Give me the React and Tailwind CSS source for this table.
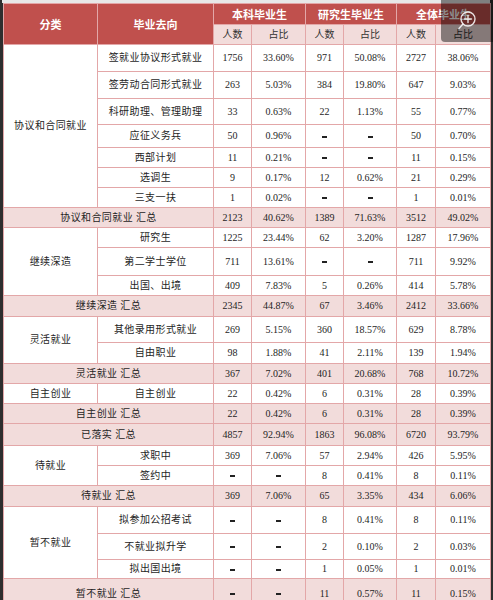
import React from 'react';

const rows = [
  { type: 'row', cat: '协议和合同就业', span: 7, name: '签就业协议形式就业', h: 27, v: ['1756', '33.60%', '971', '50.08%', '2727', '38.06%'] },
  { type: 'row', name: '签劳动合同形式就业', h: 27, v: ['263', '5.03%', '384', '19.80%', '647', '9.03%'] },
  { type: 'row', name: '科研助理、管理助理', h: 26, v: ['33', '0.63%', '22', '1.13%', '55', '0.77%'] },
  { type: 'row', name: '应征义务兵', h: 23, v: ['50', '0.96%', '-', '-', '50', '0.70%'] },
  { type: 'row', name: '西部计划', h: 20, v: ['11', '0.21%', '-', '-', '11', '0.15%'] },
  { type: 'row', name: '选调生', h: 20, v: ['9', '0.17%', '12', '0.62%', '21', '0.29%'] },
  { type: 'row', name: '三支一扶', h: 20, v: ['1', '0.02%', '-', '-', '1', '0.01%'] },
  { type: 'sum', name: '协议和合同就业 汇总', h: 20, v: ['2123', '40.62%', '1389', '71.63%', '3512', '49.02%'] },
  { type: 'row', cat: '继续深造', span: 3, name: '研究生', h: 20, v: ['1225', '23.44%', '62', '3.20%', '1287', '17.96%'] },
  { type: 'row', name: '第二学士学位', h: 28, v: ['711', '13.61%', '-', '-', '711', '9.92%'] },
  { type: 'row', name: '出国、出境', h: 20, v: ['409', '7.83%', '5', '0.26%', '414', '5.78%'] },
  { type: 'sum', name: '继续深造 汇总', h: 21, v: ['2345', '44.87%', '67', '3.46%', '2412', '33.66%'] },
  { type: 'row', cat: '灵活就业', span: 2, name: '其他录用形式就业', h: 26, v: ['269', '5.15%', '360', '18.57%', '629', '8.78%'] },
  { type: 'row', name: '自由职业', h: 21, v: ['98', '1.88%', '41', '2.11%', '139', '1.94%'] },
  { type: 'sum', name: '灵活就业 汇总', h: 20, v: ['367', '7.02%', '401', '20.68%', '768', '10.72%'] },
  { type: 'row', cat: '自主创业', span: 1, name: '自主创业', h: 20, v: ['22', '0.42%', '6', '0.31%', '28', '0.39%'] },
  { type: 'sum', name: '自主创业 汇总', h: 20, v: ['22', '0.42%', '6', '0.31%', '28', '0.39%'] },
  { type: 'sum', name: '已落实 汇总', h: 22, v: ['4857', '92.94%', '1863', '96.08%', '6720', '93.79%'] },
  { type: 'row', cat: '待就业', span: 2, name: '求职中', h: 20, v: ['369', '7.06%', '57', '2.94%', '426', '5.95%'] },
  { type: 'row', name: '签约中', h: 20, v: ['-', '-', '8', '0.41%', '8', '0.11%'] },
  { type: 'sum', name: '待就业 汇总', h: 21, v: ['369', '7.06%', '65', '3.35%', '434', '6.06%'] },
  { type: 'row', cat: '暂不就业', span: 3, name: '拟参加公招考试', h: 27, v: ['-', '-', '8', '0.41%', '8', '0.11%'] },
  { type: 'row', name: '不就业拟升学', h: 26, v: ['-', '-', '2', '0.10%', '2', '0.03%'] },
  { type: 'row', name: '拟出国出境', h: 19, v: ['-', '-', '1', '0.05%', '1', '0.01%'] },
  { type: 'sum', name: '暂不就业 汇总', h: 30, v: ['-', '-', '11', '0.57%', '11', '0.15%'] },
];

const cn = "font-['Liberation_Serif','Noto_Sans_CJK_SC',serif]";
const cell = 'border border-[#e3a7a8] text-center align-middle p-0 leading-none';

function Num({ t }) {
  // the source uses a short heavy dash for empty cells
  if (t === '-') return <span className="inline-block w-[5px] h-[2px] bg-[#222] align-middle">{''}</span>;
  return t;
}

export default function App() {
  return (
    <div className="w-[493px] h-[600px] overflow-hidden bg-[#2e2e2e] relative">
      <div className="h-[3px] ml-[2px] mr-[3px] bg-[#e8e8e8]" />
      <table className={`ml-[3px] w-[487px] table-fixed border-collapse bg-white text-[10px] text-[#1e1e1e] ${cn}`}>
        <colgroup>
          <col className="w-[94px]" />
          <col className="w-[116px]" />
          <col className="w-[38px]" />
          <col className="w-[54px]" />
          <col className="w-[38px]" />
          <col className="w-[53px]" />
          <col className="w-[39px]" />
          <col className="w-[55px]" />
        </colgroup>
        <thead>
          <tr className="h-[21px] bg-[#c0504d] text-white font-bold text-[11px] font-['Noto_Sans_CJK_SC',sans-serif]">
            <th rowSpan={2} className={cell}>分类</th>
            <th rowSpan={2} className={cell}>毕业去向</th>
            <th colSpan={2} className={cell}>本科毕业生</th>
            <th colSpan={2} className={cell}>研究生毕业生</th>
            <th colSpan={2} className={cell}>全体毕业生</th>
          </tr>
          <tr className="h-[20px] bg-[#f2dcdb] text-[#333] font-normal">
            <th className={`${cell} font-normal`}>人数</th>
            <th className={`${cell} font-normal`}>占比</th>
            <th className={`${cell} font-normal`}>人数</th>
            <th className={`${cell} font-normal`}>占比</th>
            <th className={`${cell} font-normal`}>人数</th>
            <th className={`${cell} font-normal`}>占比</th>
          </tr>
        </thead>
        <tbody>
          {rows.map((r, i) => (
            <tr key={i} style={{ height: r.h }} className={r.type === 'sum' ? 'bg-[#f2dcdb]' : 'bg-white'}>
              {r.type === 'sum' ? (
                <td colSpan={2} className={`${cell} tracking-[0.4px]`}>{r.name}</td>
              ) : (
                <>
                  {r.cat && (
                    <td rowSpan={r.span} className={`${cell} bg-white tracking-[0.4px]`}>{r.cat}</td>
                  )}
                  <td className={`${cell} tracking-[0.4px]`}>{r.name}</td>
                </>
              )}
              {r.v.map((x, j) => (
                <td key={j} className={cell}><Num t={x} /></td>
              ))}
            </tr>
          ))}
        </tbody>
      </table>
      <div className="absolute top-0 right-0 w-[52px] h-[42px] bg-black/45 rounded-bl-[4px] flex items-center justify-center">
        <svg width="22" height="22" viewBox="0 0 22 22" fill="none" stroke="white" strokeOpacity="0.85" strokeWidth="1.4" strokeLinecap="round">
          <circle cx="12" cy="9" r="7" />
          <path d="M7 14L3 18.5" />
          <path d="M12 5.5v7M8.5 9h7" />
        </svg>
      </div>
    </div>
  );
}
